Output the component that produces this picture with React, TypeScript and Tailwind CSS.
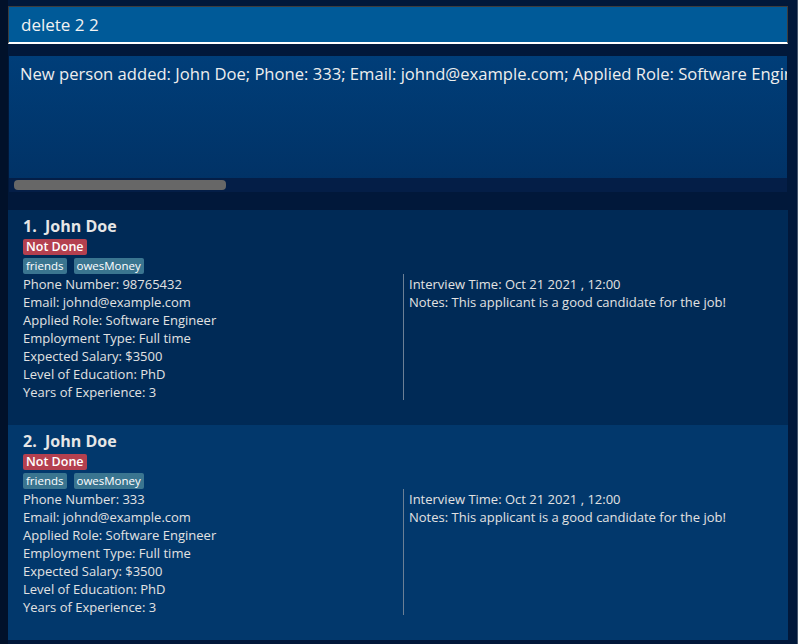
const people = [
  { idx: 1, phone: "98765432", bg: "bg-[#002a56]" },
  { idx: 2, phone: "333", bg: "bg-[#02386c]" },
];

const PersonCard = ({ idx, phone, bg }: { idx: number; phone: string; bg: string }) => {
  return (
    <div className={`${bg} h-[215px] pl-[15px] pt-[6px]`}>
      <div className="text-[16px] leading-[20px] font-bold text-[#e6e6e6] whitespace-pre">
        {idx}.  John Doe
      </div>
      <div className="mt-[3px] flex">
        <span className="bg-[#b4404f] text-white text-[12.5px] leading-[16px] font-semibold px-[3px] rounded-[2px]">
          Not Done
        </span>
      </div>
      <div className="mt-[3px] flex gap-[7px]">
        <span className="bg-[#3a7590] text-white text-[11.5px] leading-[16px] px-[3px] rounded-[2px]">
          friends
        </span>
        <span className="bg-[#3a7590] text-white text-[11.5px] leading-[16px] px-[3px] rounded-[2px]">
          owesMoney
        </span>
      </div>
      <div className="flex text-[13px] leading-[18px] text-[#e2e2e2]">
        <div className="w-[380px] pt-[1px]">
          <div>Phone Number: {phone}</div>
          <div>Email: johnd@example.com</div>
          <div>Applied Role: Software Engineer</div>
          <div>Employment Type: Full time</div>
          <div>Expected Salary: $3500</div>
          <div>Level of Education: PhD</div>
          <div>Years of Experience: 3</div>
        </div>
        <div className="border-l border-[#6b7f95] h-[126px] pl-[5px] pt-[1px]">
          <div>Interview Time: Oct 21 2021 , 12:00</div>
          <div>Notes: This applicant is a good candidate for the job!</div>
        </div>
      </div>
    </div>
  );
};

const App = () => {
  return (
    <div
      className="h-[644px] w-[798px] bg-[#01183a] flex overflow-hidden"
      style={{ fontFamily: '"Open Sans", "Noto Sans", sans-serif' }}
    >
      <div className="w-[8px] bg-[#01112a]" />
      <div className="w-[780px] flex flex-col">
        <div className="mt-[6px] h-[38px] bg-[#005a98] border border-[#3d3d3d] border-b-2 border-b-white flex items-center pl-[12px]">
          <span className="text-[17px] text-[#f2f2f2]">delete 2 2</span>
        </div>
        <div className="mt-[12px] mx-[1px] h-[136px] flex flex-col bg-gradient-to-b from-[#003e79] to-[#013164]">
          <div className="flex-1 overflow-hidden pl-[11px] pt-[6px]">
            <div className="text-[16.6px] leading-[24px] text-[#eeeeee] whitespace-nowrap">
              New person added: John Doe; Phone: 333; Email: johnd@example.com; Applied Role: Software Engineer
            </div>
          </div>
          <div className="h-[14px] bg-[#041e47] flex items-center pl-[5px]">
            <div className="h-[10px] w-[212px] rounded-[4px] bg-[#676767]" />
          </div>
        </div>
        <div className="mt-[18px] flex flex-col">
          {people.map((p) => (
            <PersonCard key={p.idx} {...p} />
          ))}
        </div>
      </div>
      <div className="w-[9px]" />
      <div className="w-[1px] bg-[#45566c]" />
    </div>
  );
};

export default App;
